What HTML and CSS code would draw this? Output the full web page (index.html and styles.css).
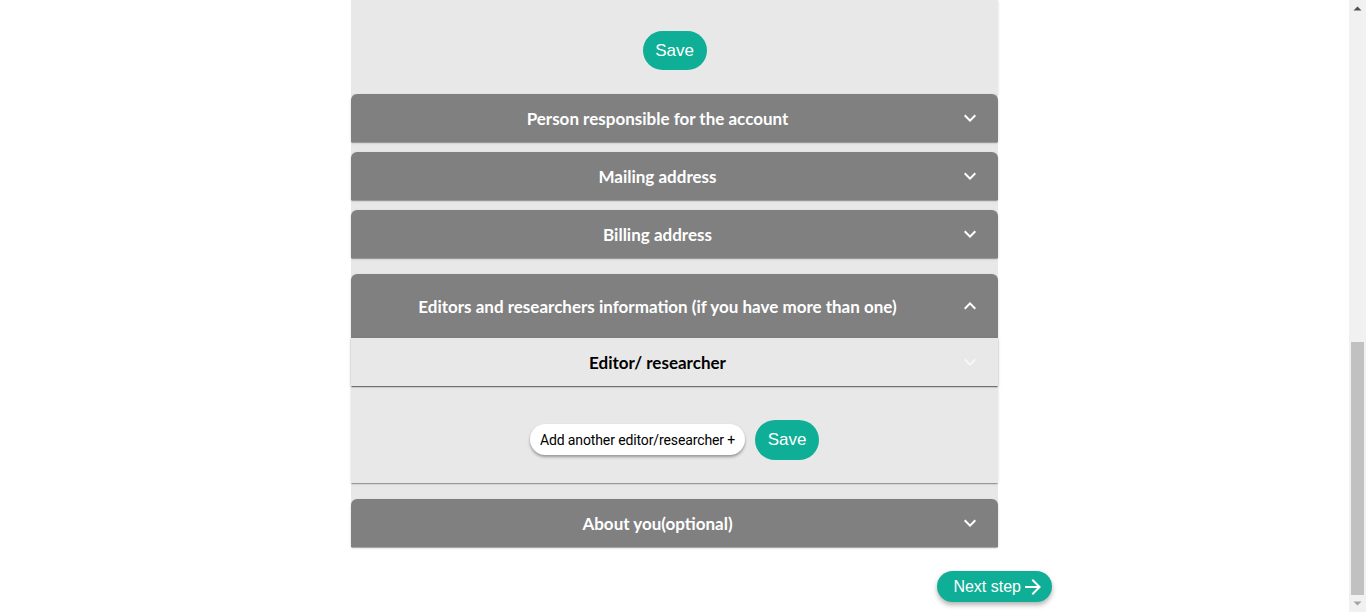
FILE: index.html
```html
<!DOCTYPE html>
<html lang="en">
<head>
<meta charset="utf-8">
<title>Create your account</title>
<link rel="stylesheet" href="styles.css">
</head>
<body>
<div class="viewport">
<main class="page">
  <section class="form">
    <div class="acc-body acc-body-top">
      <button class="btn-save">Save</button>
    </div>

    <div class="acc acc-flush">
      <div class="acc-head">
        <span class="acc-title">Person responsible for the account</span>
        <svg class="chev" viewBox="0 0 24 24"><path d="M16.59 8.59 12 13.17 7.41 8.59 6 10l6 6 6-6z"/></svg>
      </div>
    </div>

    <div class="acc">
      <div class="acc-head">
        <span class="acc-title">Mailing address</span>
        <svg class="chev" viewBox="0 0 24 24"><path d="M16.59 8.59 12 13.17 7.41 8.59 6 10l6 6 6-6z"/></svg>
      </div>
    </div>

    <div class="acc">
      <div class="acc-head">
        <span class="acc-title">Billing address</span>
        <svg class="chev" viewBox="0 0 24 24"><path d="M16.59 8.59 12 13.17 7.41 8.59 6 10l6 6 6-6z"/></svg>
      </div>
    </div>

    <div class="acc acc-spaced">
      <div class="acc-head acc-head-tall">
        <span class="acc-title">Editors and researchers information (if you have more than one)</span>
        <svg class="chev" viewBox="0 0 24 24"><path d="M7.41 15.41 12 10.83l4.59 4.58L18 14l-6-6-6 6z"/></svg>
      </div>
      <div class="acc-inner">
        <div class="sub-head">
          <span class="sub-title">Editor/ researcher</span>
          <svg class="chev chev-faint" viewBox="0 0 24 24"><path d="M16.59 8.59 12 13.17 7.41 8.59 6 10l6 6 6-6z"/></svg>
        </div>
      </div>
      <div class="acc-body acc-body-row">
        <button class="btn-add">Add another editor/researcher +</button>
        <button class="btn-save">Save</button>
      </div>
    </div>

    <div class="acc acc-spaced">
      <div class="acc-head">
        <span class="acc-title">About you(optional)</span>
        <svg class="chev" viewBox="0 0 24 24"><path d="M16.59 8.59 12 13.17 7.41 8.59 6 10l6 6 6-6z"/></svg>
      </div>
    </div>
  </section>

  <nav class="step-nav">
    <button class="btn-next"><span>Next step</span>
      <svg class="arrow" viewBox="0 0 24 24"><path d="m12 4-1.41 1.41L16.17 11H4v2h12.17l-5.58 5.59L12 20l8-8z"/></svg>
    </button>
  </nav>
</main>

<aside class="scrollbar" aria-hidden="true">
  <div class="sb-btn"><svg viewBox="0 0 17 17"><path d="M4.5 10.5h8L8.5 6.5z" fill="#505050"/></svg></div>
  <div class="sb-track">
    <div class="sb-thumb"></div>
  </div>
  <div class="sb-btn"><svg viewBox="0 0 17 17"><path d="M4.5 6.5h8L8.5 10.5z" fill="#a3a3a3"/></svg></div>
</aside>
</div>
</body>
</html>
```

FILE: styles.css
```css
html, body {
  margin: 0;
  height: 100%;
  overflow: hidden;
}
body {
  background: #ffffff;
  font-family: "Liberation Sans", Arial, sans-serif;
  color: #000;
}
.viewport {
  display: flex;
  height: 612px;
}
.page {
  flex: 1;
  display: flex;
  flex-direction: column;
  align-items: center;
}
.form {
  width: 647px;
  background: #e8e8e8;
  display: flex;
  flex-direction: column;
}
.acc {
  margin-top: 10px;
  background: #e8e8e8;
  border-radius: 6px 6px 0 0;
  box-shadow: 0 2px 1px -1px rgba(0,0,0,.2), 0 1px 1px 0 rgba(0,0,0,.14), 0 1px 3px 0 rgba(0,0,0,.12);
}
.acc-flush { margin-top: 0; }
.acc-spaced { margin-top: 16px; }
.acc-head {
  height: 48px;
  display: flex;
  align-items: center;
  padding: 0 16px;
  background: #808080;
  border-radius: 6px 6px 0 0;
  color: #fff;
}
.acc-head-tall { height: 64px; }
.acc-title {
  flex: 1;
  text-align: center;
  font-family: Lato, sans-serif;
  font-weight: 700;
  font-size: 17px;
}
.chev {
  width: 24px;
  height: 24px;
  margin-left: 10px;
  fill: #fff;
  flex: none;
}
.chev-faint { fill: #f6f6f6; }
.acc-body {
  background: #e8e8e8;
}
.acc-body-top {
  height: 94px;
  box-sizing: border-box;
  padding-top: 31px;
  display: flex;
  justify-content: center;
  align-items: flex-start;
  box-shadow: 1px 1px 2px rgba(0,0,0,.08);
}
.btn-save {
  height: 39px;
  width: 64px;
  border: none;
  border-radius: 20px;
  background: #0fae96;
  color: #fff;
  font-family: "Liberation Sans", Arial, sans-serif;
  font-size: 17px;
  padding: 0;
  cursor: pointer;
}
.acc-inner {
  background: #e8e8e8;
  box-shadow: 0 2px 1px -1px rgba(0,0,0,.35), 0 1px 1px 0 rgba(0,0,0,.2), 0 1px 3px 0 rgba(0,0,0,.12);
  position: relative;
}
.sub-head {
  height: 48px;
  display: flex;
  align-items: center;
  padding: 0 16px;
}
.sub-title {
  flex: 1;
  text-align: center;
  font-family: Lato, sans-serif;
  font-weight: 700;
  font-size: 17px;
  color: #000;
}
.acc-body-row {
  height: 97px;
  box-sizing: border-box;
  padding-top: 10px;
  display: flex;
  align-items: center;
  justify-content: center;
  gap: 10px;
}
.acc-body-row .btn-save { height: 40px; }
.btn-add {
  height: 31px;
  padding: 0 10px;
  border: none;
  border-radius: 16px;
  background: #fff;
  box-shadow: 0 2px 3px rgba(0,0,0,.35);
  font-family: Roboto, sans-serif;
  font-size: 14px;
  letter-spacing: -0.12px;
  color: #000;
  cursor: pointer;
}
.step-nav {
  width: 755px;
  display: flex;
  justify-content: flex-end;
  padding-top: 24px;
}
.btn-next {
  height: 31px;
  padding: 0 7px 0 16px;
  border: none;
  border-radius: 16px;
  background: #0fae96;
  color: #fff;
  font-family: "Liberation Sans", Arial, sans-serif;
  font-size: 16px;
  display: flex;
  align-items: center;
  gap: 0;
  box-shadow: 0 3px 5px rgba(0,0,0,.3);
  cursor: pointer;
}
.arrow {
  width: 24px;
  height: 24px;
  fill: #fff;
}
.scrollbar {
  width: 17px;
  flex: none;
  background: #f1f1f1;
  display: flex;
  flex-direction: column;
}
.sb-btn {
  height: 17px;
  flex: none;
}
.sb-btn svg {
  display: block;
  width: 17px;
  height: 17px;
}
.sb-track {
  flex: 1;
  display: flex;
  flex-direction: column;
  justify-content: flex-end;
}
.sb-thumb {
  height: 253px;
  margin: 0 2px;
  background: #c1c1c1;
}
```
